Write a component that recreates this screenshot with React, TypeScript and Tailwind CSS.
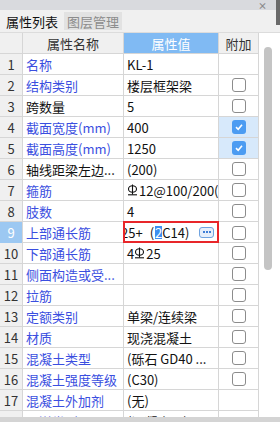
import type { ReactNode } from "react";

type Row = {
  no: number;
  name: string;
  value: ReactNode;
  blue: boolean;
  check: "none" | "off" | "on";
};

function Rebar() {
  return (
    <svg width="11" height="12" viewBox="0 0 11 12" className="mr-[1px] inline-block shrink-0 align-[-1px]">
      <ellipse cx="5.5" cy="5" rx="4" ry="3.3" fill="none" stroke="#111" strokeWidth="1.1" />
      <line x1="5.5" y1="0.5" x2="5.5" y2="10.5" stroke="#111" strokeWidth="1.1" />
      <line x1="1" y1="10.8" x2="10" y2="10.8" stroke="#111" strokeWidth="1.1" />
    </svg>
  );
}

const rows: Row[] = [
  { no: 1, name: "名称", value: "KL-1", blue: true, check: "none" },
  { no: 2, name: "结构类别", value: "楼层框架梁", blue: true, check: "off" },
  { no: 3, name: "跨数量", value: "5", blue: false, check: "off" },
  { no: 4, name: "截面宽度(mm)", value: "400", blue: true, check: "on" },
  { no: 5, name: "截面高度(mm)", value: "1250", blue: true, check: "on" },
  { no: 6, name: "轴线距梁左边...", value: "(200)", blue: false, check: "off" },
  { no: 7, name: "箍筋", value: <><Rebar /><span className="shrink-0">12@100/200(4)</span></>, blue: true, check: "off" },
  { no: 8, name: "肢数", value: "4", blue: true, check: "off" },
  { no: 9, name: "上部通长筋", value: null, blue: true, check: "off" },
  { no: 10, name: "下部通长筋", value: <>4<Rebar />25</>, blue: true, check: "off" },
  { no: 11, name: "侧面构造或受...", value: "", blue: true, check: "off" },
  { no: 12, name: "拉筋", value: "", blue: true, check: "off" },
  { no: 13, name: "定额类别", value: "单梁/连续梁", blue: true, check: "off" },
  { no: 14, name: "材质", value: "现浇混凝土", blue: true, check: "off" },
  { no: 15, name: "混凝土类型", value: "(砾石 GD40 ...", blue: true, check: "off" },
  { no: 16, name: "混凝土强度等级", value: "(C30)", blue: true, check: "off" },
  { no: 17, name: "混凝土外加剂", value: "(无)", blue: true, check: "none" },
  { no: 18, name: "泵送类型", value: "(混凝土泵)", blue: true, check: "none" },
];

function Check({ state }: { state: Row["check"] }) {
  if (state === "none") return null;
  if (state === "on")
    return (
      <div className="flex h-[14px] w-[14px] items-center justify-center rounded-[3px] bg-[#4c9cf2]">
        <svg width="10" height="10" viewBox="0 0 10 10">
          <path d="M2 5.2 L4.2 7.3 L8 2.8" fill="none" stroke="#fff" strokeWidth="1.6" />
        </svg>
      </div>
    );
  return <div className="h-[14px] w-[14px] rounded-[3px] border border-[#8c8c8c] bg-white" />;
}

function EditCell() {
  return (
    <div className="flex h-full items-center overflow-hidden border-2 border-[#e8262a] bg-white pr-[3px] text-[#111]">
      <span className="-ml-[4px] shrink-0">25+</span>
      <span className="ml-[7px] shrink-0">(</span>
      <span className="ml-[1px] shrink-0 bg-[#3d8ff0] text-white">2</span>
      <span className="shrink-0">C14)</span>
      <div className="ml-auto flex h-[11px] w-[15px] shrink-0 items-center justify-center gap-[1px] rounded-[3px] border border-[#6fa3e0] bg-[#e6effb]">
        <span className="h-[2px] w-[2px] bg-[#3f7fd6]" />
        <span className="h-[2px] w-[2px] bg-[#3f7fd6]" />
        <span className="h-[2px] w-[2px] bg-[#3f7fd6]" />
      </div>
    </div>
  );
}

export default function App() {
  return (
    <div
      className="flex h-[422px] w-[280px] flex-col overflow-hidden bg-white text-[12px] leading-none"
      style={{ fontFamily: '"Noto Sans CJK SC", "Noto Sans", sans-serif' }}
    >
      <div className="flex h-[10px] shrink-0 items-center bg-[#d9dade]">
        <span className="ml-auto mr-[9px] text-[9px] font-bold leading-none text-[#8a8a8a]">×</span>
        <div className="h-full w-[4px] bg-[#6a6a6a]" />
      </div>
      <div className="flex h-[23px] shrink-0 items-stretch border-b border-[#dcdcdc] bg-[#f0f0f0]">
        <div className="flex w-[64px] items-center justify-center text-[13px] text-[#111]">属性列表</div>
        <div className="my-[2px] flex w-[58px] items-center justify-center bg-[#e2e2e2] text-[13px] text-[#8c8c8c]">图层管理</div>
        <div className="flex-1" />
        <div className="h-[15px] w-[4px] bg-[#6a6a6a]" />
      </div>
      <div className="flex min-h-0 flex-1">
        <div className="w-[259px] overflow-hidden">
          <div className="grid h-[21px] grid-cols-[23px_101px_95px_40px] border-b border-[#d6d6d6] bg-[#f0f0f0] text-[13px]">
            <div className="border-r border-[#d6d6d6]" />
            <div className="flex items-center justify-center border-r border-[#d6d6d6] text-[#333]">属性名称</div>
            <div className="flex items-center justify-center border-r border-[#d6d6d6] bg-[#80baf3] text-white">属性值</div>
            <div className="flex items-center justify-center border-r border-[#d6d6d6] text-[#333]">附加</div>
          </div>
          {rows.map((r) => (
            <div key={r.no} className="grid h-[21px] grid-cols-[23px_101px_95px_40px] border-b border-[#d6d6d6] text-[13px]">
              <div
                className={
                  r.no === 9
                    ? "flex items-center justify-center border-r border-[#d6d6d6] bg-[#9cc8f2] text-white"
                    : "flex items-center justify-center border-r border-[#d6d6d6] bg-[#f0f0f0] text-[#333]"
                }
              >
                {r.no}
              </div>
              <div
                className={
                  r.blue
                    ? "flex items-center overflow-hidden whitespace-nowrap border-r border-[#d6d6d6] pl-[3px] text-[#3a4ee0]"
                    : "flex items-center overflow-hidden whitespace-nowrap border-r border-[#d6d6d6] pl-[3px] text-[#111]"
                }
              >
                {r.name}
              </div>
              {r.no === 9 ? (
                <div className="-mt-px -ml-px h-[22px] w-[96px]">
                  <EditCell />
                </div>
              ) : (
                <div className="flex items-center overflow-hidden whitespace-nowrap border-r border-[#d6d6d6] pl-[3px] text-[#111]">
                  {r.value}
                </div>
              )}
              <div
                className={
                  r.check === "on"
                    ? "flex items-center justify-center border-r border-[#d6d6d6] bg-[#d7e9fb]"
                    : "flex items-center justify-center border-r border-[#d6d6d6]"
                }
              >
                <Check state={r.check} />
              </div>
            </div>
          ))}
        </div>
        <div className="flex flex-1 flex-col items-start pl-[5px] pt-[14px]">
          <div className="h-[223px] w-[8px] rounded-full bg-[#c4c4c4]" />
        </div>
      </div>
      <div className="h-[5px] shrink-0 bg-[#d4d4d4]" />
    </div>
  );
}
